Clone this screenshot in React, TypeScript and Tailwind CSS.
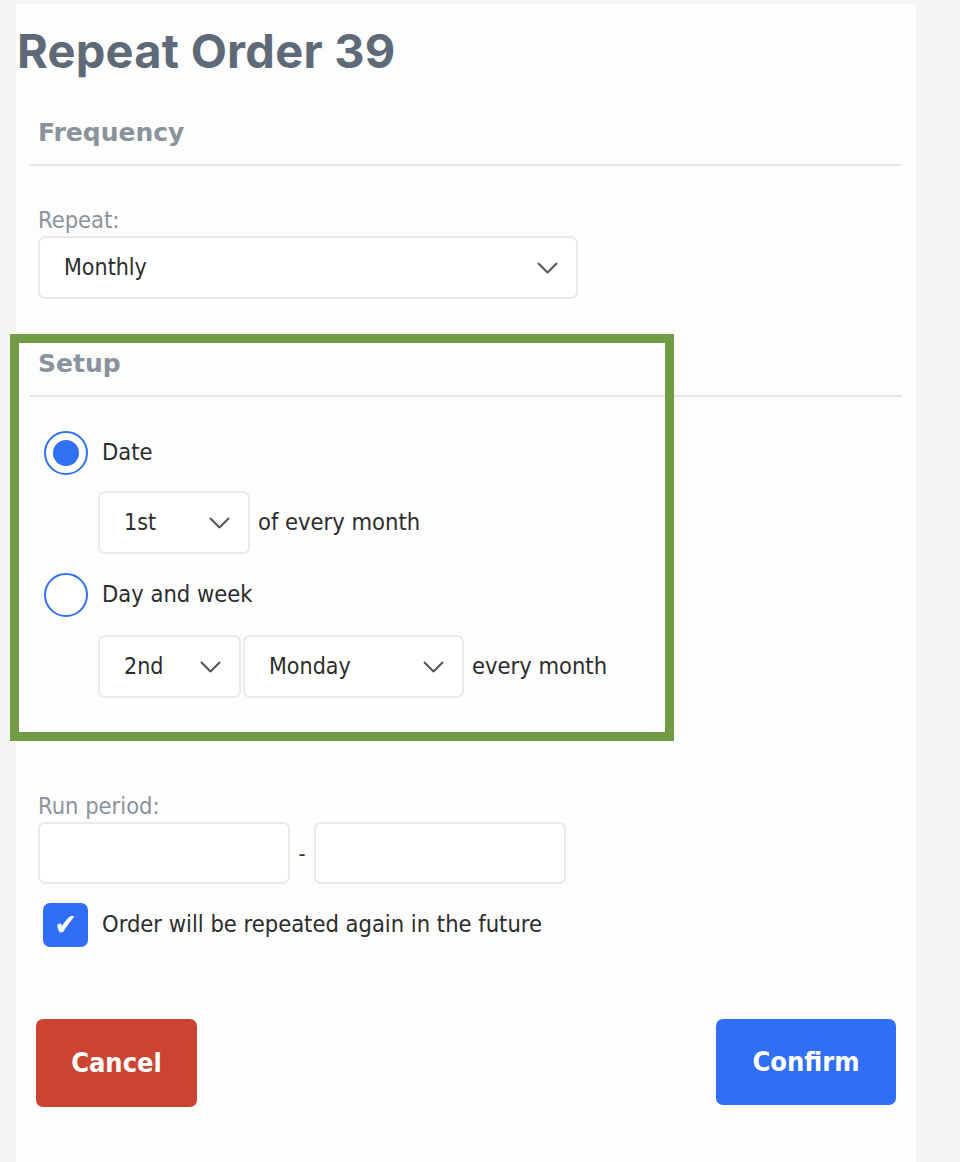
import React from "react"

const BODY = "font-['DejaVu_Sans_Condensed','DejaVu_Sans',sans-serif]"

function Chevron() {
  return (
    <svg width="21" height="12" viewBox="0 0 21 12" fill="none" stroke="#555" strokeWidth="2" strokeLinecap="round" strokeLinejoin="round">
      <path d="M1.5 1.5l9 9 9-9" />
    </svg>
  )
}

function Select({ value, className }: { value: string; className: string }) {
  return (
    <div className={`flex items-center justify-between h-[63px] bg-white border-2 border-[#e9e9e9] rounded-[7px] pl-[24px] pr-[18px] ${className}`}>
      <span className="text-[23px] text-[#2c2c2c]">{value}</span>
      <Chevron />
    </div>
  )
}

function Radio({ checked, label }: { checked: boolean; label: string }) {
  return (
    <div className="flex items-center gap-[14px] pl-[6px]">
      <span className="w-[44px] h-[44px] rounded-full border-2 border-[#3070f2] bg-white flex items-center justify-center">
        {checked && <span className="w-[26px] h-[26px] rounded-full bg-[#3070f2]" />}
      </span>
      <span className="text-[23.5px] text-[#2c2c2c]">{label}</span>
    </div>
  )
}

function SectionHeader({ title }: { title: string }) {
  return (
    <div>
      <h2 className="px-2 text-[25px] font-bold text-[#8a939c] leading-[34px] font-['DejaVu_Sans',sans-serif]">{title}</h2>
      <div className="h-[2px] bg-[#e7e7e7] mt-[14px]" />
    </div>
  )
}

export default function App() {
  return (
    <div className={`min-h-screen bg-[#f5f5f5] pt-1 pl-4 ${BODY}`}>
      <div className="w-[900px] min-h-[1158px] bg-[#fdfdfd] relative">
        {/* Title */}
        <h1 className="pl-[1px] pt-[20px] text-[47px] leading-[54px] font-bold text-[#5e6a78] font-['Inter',sans-serif] tracking-[0.005em]">
          Repeat Order 39
        </h1>

        <div className="px-[14px] mt-[38px]">
          <SectionHeader title="Frequency" />

          {/* Repeat */}
          <div className="px-2 mt-[40px]">
            <div className="text-[23.5px] text-[#8a939c] leading-[28px]">Repeat:</div>
            <Select value="Monthly" className="w-[540px] mt-[2px]" />
          </div>

          {/* Setup */}
          <div className="mt-[48px]">
            <SectionHeader title="Setup" />
          </div>

          <div className="px-2 mt-[34px]">
            <Radio checked label="Date" />
            <div className="flex items-center gap-[8px] pl-[60px] mt-[16px]">
              <Select value="1st" className="w-[152px]" />
              <span className="text-[23.5px] text-[#2c2c2c]">of every month</span>
            </div>
            <div className="mt-[19px]">
              <Radio checked={false} label="Day and week" />
            </div>
            <div className="flex items-center pl-[60px] mt-[18px]">
              <Select value="2nd" className="w-[143px]" />
              <Select value="Monday" className="w-[221px] ml-[2px]" />
              <span className="text-[23.5px] text-[#2c2c2c] ml-[8px]">every month</span>
            </div>
          </div>

          {/* Run period */}
          <div className="px-2 mt-[94px]">
            <div className="text-[23.5px] text-[#8a939c] leading-[28px]">Run period:</div>
            <div className="flex items-center mt-[2px]">
              <div className="w-[252px] h-[62px] bg-white border-2 border-[#e9e9e9] rounded-[7px]" />
              <span className="w-[24px] text-center text-[22px] text-[#2c2c2c]">-</span>
              <div className="w-[252px] h-[62px] bg-white border-2 border-[#e9e9e9] rounded-[7px]" />
            </div>
            <div className="flex items-center gap-[14px] mt-[19px] pl-[5px]">
              <span className="w-[45px] h-[44px] rounded-[7px] bg-[#306ef5] flex items-center justify-center text-white text-[30px] leading-none">✔</span>
              <span className="text-[23.5px] text-[#2c2c2c]">Order will be repeated again in the future</span>
            </div>
          </div>

          {/* Buttons */}
          <div className="flex justify-between items-start mt-[72px] pl-[6px] pr-[6px]">
            <button className="w-[161px] h-[88px] rounded-[7px] bg-[#cb4432] text-white text-[27px] font-bold">Cancel</button>
            <button className="w-[180px] h-[86px] rounded-[7px] bg-[#306ef5] text-white text-[27px] font-bold">Confirm</button>
          </div>
        </div>

        {/* Highlight frame around Setup */}
        <div className="absolute left-[-6px] top-[330px] w-[664px] h-[407px] border-[9px] border-[#729b45] pointer-events-none" />
      </div>
    </div>
  )
}
